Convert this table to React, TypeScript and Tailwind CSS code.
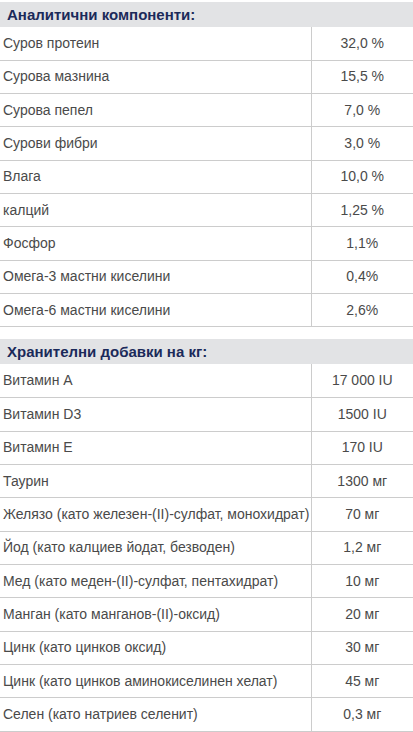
const analytic: [string, string][] = [
  ["Суров протеин", "32,0 %"],
  ["Сурова мазнина", "15,5 %"],
  ["Сурова пепел", "7,0 %"],
  ["Сурови фибри", "3,0 %"],
  ["Влага", "10,0 %"],
  ["калций", "1,25 %"],
  ["Фосфор", "1,1%"],
  ["Омега-3 мастни киселини", "0,4%"],
  ["Омега-6 мастни киселини", "2,6%"],
];

const additives: [string, string][] = [
  ["Витамин А", "17 000 IU"],
  ["Витамин D3", "1500 IU"],
  ["Витамин Е", "170 IU"],
  ["Таурин", "1300 мг"],
  ["Желязо (като железен-(II)-сулфат, монохидрат)", "70 мг"],
  ["Йод (като калциев йодат, безводен)", "1,2 мг"],
  ["Мед (като меден-(II)-сулфат, пентахидрат)", "10 мг"],
  ["Манган (като манганов-(II)-оксид)", "20 мг"],
  ["Цинк (като цинков оксид)", "30 мг"],
  ["Цинк (като цинков аминокиселинен хелат)", "45 мг"],
  ["Селен (като натриев селенит)", "0,3 мг"],
];

function Section({ title, rows }: { title: string; rows: [string, string][] }) {
  return (
    <table className="w-full border-collapse">
      <thead>
        <tr className="h-[25px] bg-[#e2e3e5]">
          <th
            colSpan={2}
            className="pl-[7px] text-left text-[15px] font-bold leading-none text-[#1b2a5a]"
          >
            {title}
          </th>
        </tr>
      </thead>
      <tbody>
        {rows.map(([name, value]) => (
          <tr key={name} className="h-[33.33px] border-b border-[#cccccc]">
            <td className="w-[311px] border-r border-[#cccccc] pl-[3px] text-[14px] text-[#4a4a4a]">
              {name}
            </td>
            <td className="text-center text-[14px] text-[#4a4a4a]">{value}</td>
          </tr>
        ))}
      </tbody>
    </table>
  );
}

export default function App() {
  return (
    <div className="w-[413px] bg-white pt-[2px] font-['Liberation_Sans',Arial,sans-serif]">
      <Section title="Аналитични компоненти:" rows={analytic} />
      <div className="h-[12px]" />
      <Section title="Хранителни добавки на кг:" rows={additives} />
    </div>
  );
}
